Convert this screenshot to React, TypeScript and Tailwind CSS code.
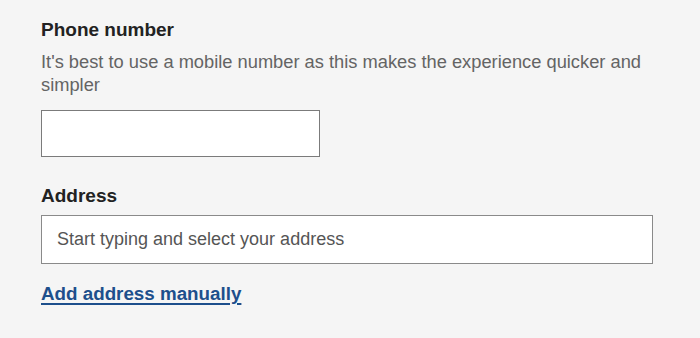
import React from "react";

export default function App() {
  return (
    <div className="w-[700px] h-[338px] bg-[#f5f5f5] overflow-hidden" style={{ fontFamily: '"Liberation Sans", Arial, sans-serif' }}>
      <div className="pl-[41px] pr-[40px] pt-[18px]">
        <label className="block text-[19px] leading-[24px] font-bold text-[#222]">Phone number</label>
        <p className="mt-[8px] text-[18.3px] leading-[23px] text-[#646464] max-w-[619px]">
          It's best to use a mobile number as this makes the experience quicker and simpler
        </p>
        <div className="mt-[14px] w-[279px] h-[47px] bg-white border border-[#7b7b7b]"></div>
        <label className="block mt-[27px] text-[19px] leading-[24px] font-bold text-[#222]">Address</label>
        <div className="mt-[7px] w-[612px] h-[49px] bg-white border border-[#8a8a8a] flex items-center px-[15px] text-[18px] text-[#555]">
          Start typing and select your address
        </div>
        <a href="#" className="inline-block mt-[18px] text-[18.8px] leading-[24px] font-bold text-[#1d4f8c] underline underline-offset-[3px] decoration-2">
          Add address manually
        </a>
      </div>
    </div>
  );
}
